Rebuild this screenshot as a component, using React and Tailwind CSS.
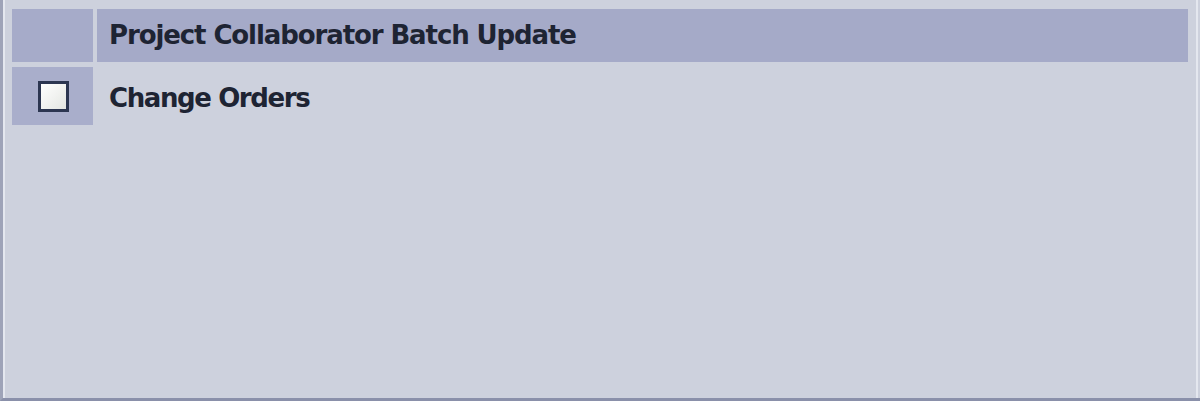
export default function App() {
  return (
    <div className="w-[1200px] h-[401px] bg-[#cdd1dd] flex flex-col overflow-hidden" style={{ fontFamily: '"DejaVu Sans", Verdana, sans-serif' }}>
      <div className="flex-1 flex border-l-[3px] border-l-[#9ea3b8] border-b-[3px] border-b-[#8a90aa]">
        <div className="flex-1 flex flex-col border-l-2 border-l-[#e4e7ef] border-r-2 border-r-[#e4e7ef] pt-[9px] pl-[7px] pr-[8px] mr-[2px]">
          <div className="flex h-[53px] gap-[4px]">
            <div className="w-[81px] bg-[#a6abc9]"></div>
            <div className="flex-1 bg-[#a5aac8] flex items-center pl-[12px] text-[26px] font-bold text-[#1e2433] tracking-[-1.1px]">
              Project Collaborator Batch Update
            </div>
          </div>
          <div className="flex h-[58px] gap-[4px] mt-[5px]">
            <div className="w-[81px] bg-[#a9aecb] flex items-center justify-center">
              <div className="w-[31px] h-[31px] ml-[2px] border-[3px] border-[#2c3651] bg-gradient-to-br from-[#ffffff] to-[#e4e6e2]"></div>
            </div>
            <div className="flex-1 flex items-start pt-[12px] pl-[12px] text-[26px] font-bold text-[#1e2433] tracking-[-1.4px]">
              Change Orders
            </div>
          </div>
        </div>
      </div>
    </div>
  );
}
